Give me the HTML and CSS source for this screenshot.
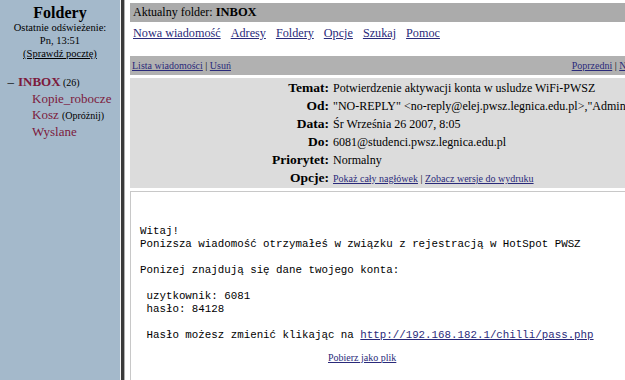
FILE: index.html
```html
<!DOCTYPE html>
<html>
<head>
<meta charset="utf-8">
<link rel="stylesheet" href="styles.css">
</head>
<body>
<div class="frames">
  <div class="left">
    <div class="title">Foldery</div>
    <div class="small">Ostatnie odświeżenie:</div>
    <div class="small">Pn, 13:51</div>
    <div class="small"><a class="plain" href="#">(Sprawdź pocztę)</a></div>
    <ul class="folders">
      <li class="inbox"><span class="dash">–</span><span class="fname bold">INBOX</span> <span class="cnt">(26)</span></li>
      <li class="sub"><span class="fname">Kopie_robocze</span></li>
      <li class="sub"><span class="fname">Kosz</span> <span class="cnt">(Opróżnij)</span></li>
      <li class="sub"><span class="fname">Wyslane</span></li>
    </ul>
  </div>
  <div class="divider"></div>
  <div class="main">
    <div class="folderbar">Aktualny folder: <b>INBOX</b></div>
    <div class="menu">
      <a href="#">Nowa wiadomość</a><a href="#">Adresy</a><a href="#">Foldery</a><a href="#">Opcje</a><a href="#">Szukaj</a><a href="#">Pomoc</a>
    </div>
    <div class="navbar">
      <span><a href="#">Lista wiadomości</a> | <a href="#">Usuń</a></span>
      <span class="right"><a href="#">Poprzedni</a> | <a href="#">Następny</a></span>
    </div>
    <div class="headers">
      <div class="lab">Temat:</div><div class="val">Potwierdzenie aktywacji konta w usludze WiFi-PWSZ</div>
      <div class="lab">Od:</div><div class="val">"NO-REPLY" &lt;no-reply@elej.pwsz.legnica.edu.pl&gt;,"Administrator"</div>
      <div class="lab">Data:</div><div class="val">Śr Września 26 2007, 8:05</div>
      <div class="lab">Do:</div><div class="val">6081@studenci.pwsz.legnica.edu.pl</div>
      <div class="lab">Priorytet:</div><div class="val">Normalny</div>
      <div class="lab">Opcje:</div><div class="val small-links"><a href="#">Pokaż cały nagłówek</a> | <a href="#">Zobacz wersje do wydruku</a></div>
    </div>
    <div class="body">
<pre class="msg">Witaj!
Ponizsza wiadomość otrzymałeś w związku z rejestracją w HotSpot PWSZ

Ponizej znajdują się dane twojego konta:

 uzytkownik: 6081
 hasło: 84128

 Hasło możesz zmienić klikając na <a href="#">http://192.168.182.1/chilli/pass.php</a></pre>
      <div class="download"><a href="#">Pobierz jako plik</a></div>
    </div>
  </div>
</div>
</body>
</html>
```
FILE: styles.css
```css
html, body {
  margin: 0;
  padding: 0;
  overflow: hidden;
  width: 625px;
  height: 380px;
  background: #fff;
  font-family: "Liberation Serif", "Times New Roman", serif;
  color: #000;
}
a { color: #2a2a7a; }
.frames {
  display: flex;
  height: 380px;
}
.left {
  width: 120px;
  flex: none;
  background: #a4b9cb;
  text-align: center;
  padding-top: 5px;
  box-sizing: border-box;
}
.title {
  font-weight: bold;
  font-size: 16px;
  line-height: 16px;
}
.small {
  font-size: 10.5px;
  line-height: 13px;
}
.left a.plain { color: #000; }
.folders {
  list-style: none;
  margin: 14px 0 0 0;
  padding: 0;
  text-align: left;
}
.folders li {
  font-size: 13px;
  line-height: 16px;
  white-space: nowrap;
}
.dash { display: inline-block; width: 15px; text-align: right; padding-right: 1px; box-sizing: border-box; margin-right: 3px; }
.fname { color: #7c1a3c; }
.bold { font-weight: bold; }
.cnt { font-size: 10px; }
.inbox .cnt { margin-left: -1px; }
.sub { padding-left: 32px; }
.divider {
  width: 3px;
  flex: none;
  border-left: 1px solid #f4f4f4;
  border-right: 1px solid #b0b0b0;
  background: #3a3a3a;
  margin-right: 5px;
}
.main {
  flex: none;
  width: 530px;
  padding-top: 3px;
}
.folderbar {
  background: #ababab;
  font-size: 12px;
  line-height: 19px;
  padding-left: 3px;
}
.folderbar b { font-size: 12.5px; }
.menu {
  font-size: 12.2px;
  line-height: 17px;
  padding: 3px 0 0 3px;
  display: flex;
  align-items: flex-start;
  gap: 10px;
  height: 34px;
  box-sizing: border-box;
}
.navbar {
  background: #b1b1b1;
  font-size: 10px;
  line-height: 19px;
  padding: 0 3px 0 2px;
  display: flex;
  justify-content: space-between;
  border-bottom: 3px solid #fff;
}
.headers {
  background: #dcdcdc;
  display: grid;
  grid-template-columns: 199px 1fr;
  column-gap: 4px;
  align-items: baseline;
  font-size: 12px;
  line-height: 18px;
  padding: 1px 0 0;
  white-space: nowrap;
}
.lab {
  text-align: right;
  font-weight: bold;
  font-size: 13.5px;
}
.small-links { font-size: 10px; }
.body {
  margin-top: 3px;
  border: 1px solid #c8c8c8;
  border-right: none;
  height: 220px;
  padding: 33px 0 0 9px;
  box-sizing: border-box;
}
.msg {
  margin: 0;
  font-family: "Liberation Mono", "Courier New", monospace;
  font-size: 10.8px;
  line-height: 13px;
}
.download {
  font-size: 10px;
  padding-left: 188px;
  margin-top: 10px;
}
```
